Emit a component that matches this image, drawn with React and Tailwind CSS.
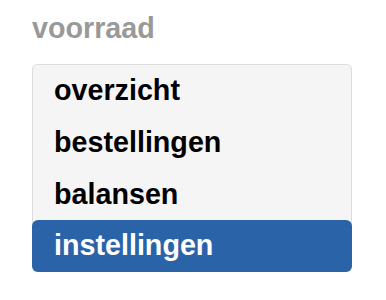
export default function App() {
  const items = [
    { label: 'overzicht', h: 'h-[52px]' },
    { label: 'bestellingen', h: 'h-[52px]' },
    { label: 'balansen', h: 'h-[51px]' },
  ]
  return (
    <div className="min-h-[300px] bg-white px-8 pt-3 font-['Liberation_Sans',Arial,sans-serif] font-bold">
      <h2 className="text-[28.7px] leading-[32px] text-[#999999]">voorraad</h2>
      <ul className="mt-5 w-[320px] rounded-[5px] border border-[#dddddd] bg-[#f5f5f5] text-[28.7px]">
        {items.map((it) => (
          <li key={it.label} className={`${it.h} flex items-center pl-[21px] text-black`}>
            {it.label}
          </li>
        ))}
        <li className="-mx-px -mb-px flex h-[52px] items-center rounded-md bg-[#2b63a9] pl-[22px] text-white">
          instellingen
        </li>
      </ul>
    </div>
  )
}
